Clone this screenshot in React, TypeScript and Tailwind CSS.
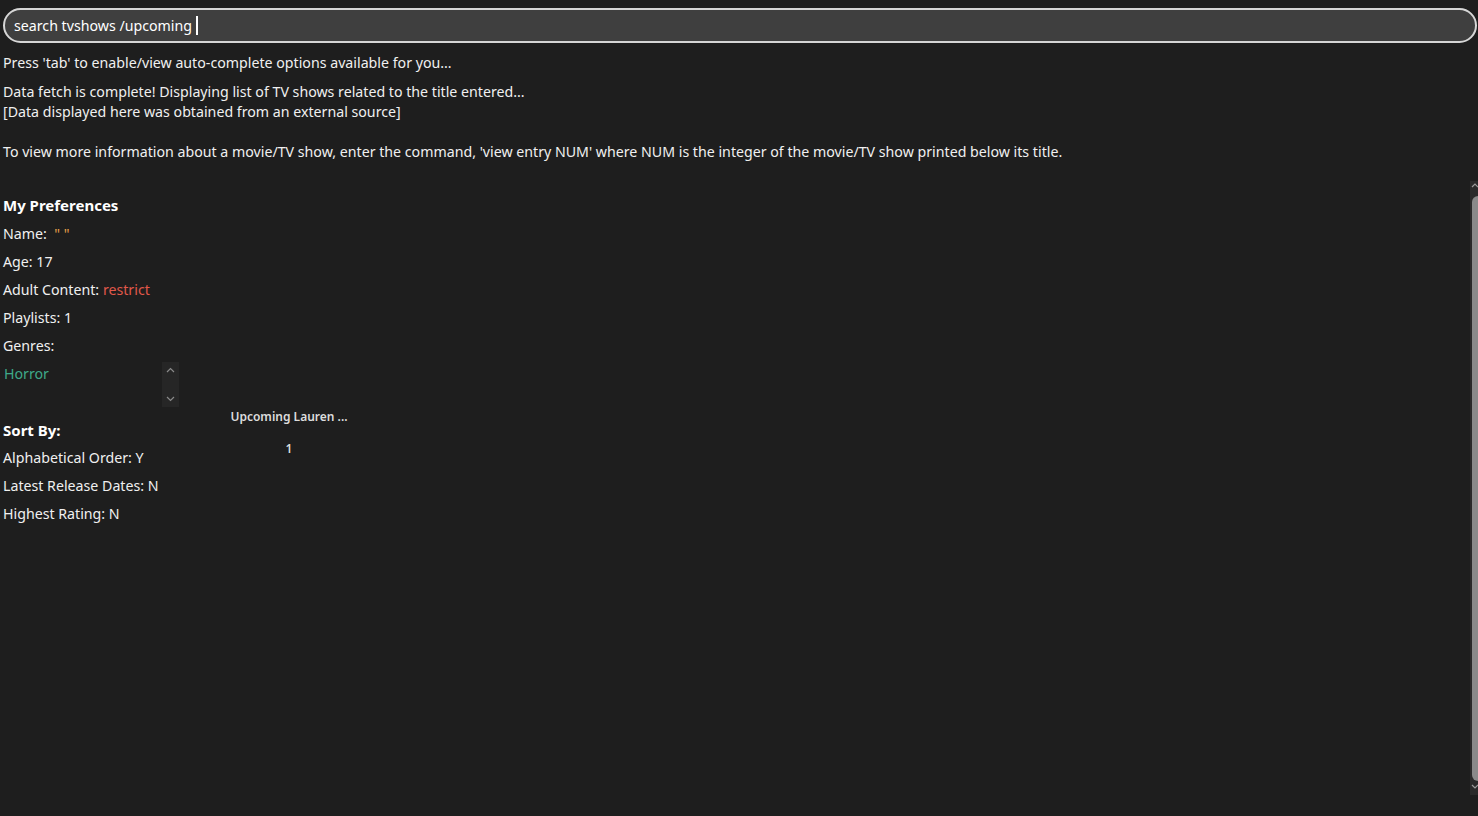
import React from "react";

const font = { fontFamily: '"Noto Sans", "Open Sans", sans-serif' };

function PrefRow({ label, value, valueClass }: { label: string; value?: string; valueClass?: string }) {
  return (
    <p className="h-[28px] text-[14.2px] leading-[28px] text-[#f0f0f0]">
      {label}
      {value ? <span className={valueClass ?? "text-[#f0f0f0]"}> {value}</span> : null}
    </p>
  );
}

export default function App() {
  return (
    <div className="relative h-[816px] w-full overflow-hidden bg-[#1e1e1e] text-[#f0f0f0]" style={font}>
      <div className="pl-[3px] pr-[1px] pt-[8px]">
        <div className="flex h-[35px] items-center rounded-full border-2 border-[#d6d6d6] bg-[#3f3f3f] px-[9px] text-[14.2px] text-white">
          <span>search tvshows /upcoming</span>
          <span className="ml-[4px] h-[19px] w-[1.5px] bg-white" />
        </div>
      </div>

      <div className="px-[3px] text-[14.2px]">
        <p className="mt-[10px] leading-[20px]">Press 'tab' to enable/view auto-complete options available for you...</p>
        <p className="mt-[9px] leading-[20px]">Data fetch is complete! Displaying list of TV shows related to the title entered...</p>
        <p className="leading-[20px]">[Data displayed here was obtained from an external source]</p>
        <p className="mt-[20px] leading-[20px]">
          To view more information about a movie/TV show, enter the command, 'view entry NUM' where NUM is the integer of the movie/TV show printed below its title.
        </p>

        <div className="mt-[30px] w-[226px]">
          <p className="h-[28px] text-[15px] font-bold leading-[27px] text-white">My Preferences</p>
          <PrefRow label="Name: " value={'\u00a0" "'} valueClass="text-[#e8a04a]" />
          <PrefRow label="Age:" value="17" />
          <PrefRow label="Adult Content:" value="restrict" valueClass="text-[#e0584a]" />
          <PrefRow label="Playlists:" value="1" />
          <PrefRow label="Genres:" />
          <div className="flex h-[56px] items-start">
            <p className="w-[159px] pl-[1px] text-[14.2px] leading-[28px] text-[#3fa98a]">Horror</p>
            <div className="mt-[2px] flex h-[45px] w-[17px] flex-col items-center justify-between bg-[#262626] py-[5px] text-[#8a8a8a]">
              <svg width="9" height="6" viewBox="0 0 9 6" fill="none" stroke="currentColor" strokeWidth="1.2">
                <path d="M1 5 L4.5 1.5 L8 5" />
              </svg>
              <svg width="9" height="6" viewBox="0 0 9 6" fill="none" stroke="currentColor" strokeWidth="1.2">
                <path d="M1 1 L4.5 4.5 L8 1" />
              </svg>
            </div>
          </div>
          <p className="h-[28px] text-[15px] font-bold leading-[28px] text-white">Sort By:</p>
          <PrefRow label="Alphabetical Order:" value="Y" />
          <PrefRow label="Latest Release Dates:" value="N" />
          <PrefRow label="Highest Rating:" value="N" />
        </div>
      </div>

      <div className="absolute left-[226px] top-[408px] flex w-[126px] flex-col items-center text-[12px] font-semibold text-[#dcdcdc]">
        <p className="leading-[18px]">Upcoming Lauren ...</p>
        <p className="mt-[14px] leading-[18px]">1</p>
      </div>

      <div className="absolute right-0 top-[181px] flex h-[614px] w-[8px] flex-col items-center bg-[#2a2a2a]">
        <svg width="8" height="10" viewBox="0 0 8 10" fill="none" stroke="#9a9a9a" strokeWidth="1.2">
          <path d="M2 6 L5 3 L8 6" />
        </svg>
        <div className="ml-[2px] mt-[5px] w-[6px] flex-1 rounded-l-full bg-[#8a8a8a]" />
        <svg width="8" height="14" viewBox="0 0 8 14" fill="none" stroke="#9a9a9a" strokeWidth="1.2">
          <path d="M2 4 L5 7 L8 4" />
        </svg>
      </div>
    </div>
  );
}
